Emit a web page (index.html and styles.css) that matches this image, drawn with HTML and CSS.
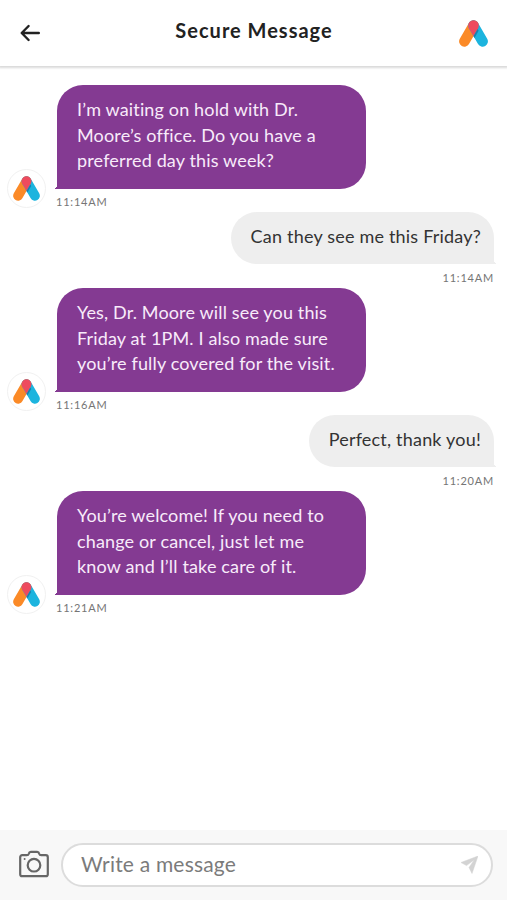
FILE: index.html
```
<!DOCTYPE html>
<html lang="en">
<head>
    <meta charset="UTF-8">
    <meta name="viewport" content="width=device-width, initial-scale=1.0">
    <title>Secure Message</title>
    <link rel="stylesheet" href="styles.css">
</head>
<body>

    <!-- shared shapes -->
    <svg class="defs" width="0" height="0">
        <symbol id="logo" viewBox="0 0 29 27">
            <path d="M5.4 21.4 14.5 5.6" stroke="#fb8a27" stroke-width="10.6" stroke-linecap="round" fill="none"/>
            <path d="M14.5 5.6 23.6 21.4" stroke="#1cb4de" stroke-width="10.6" stroke-linecap="round" fill="none"/>
            <circle cx="14.5" cy="5.6" r="5.3" fill="#ee4b5e"/>
            <path d="M9.9 8.2 14.5 16.2 19.1 8.2 14.5 4z" fill="#ee4b5e"/>
            <path d="M14.5 16.2 18.6 9.1 19.6 10.8 15.5 17.9z" fill="#1a80ae"/>
        </symbol>
    </svg>

    <header class="header">
        <svg class="back" viewBox="0 0 20 18" width="20" height="18">
            <path d="M18.8 9H2M8.6 2 1.7 9l6.9 7" fill="none" stroke="#222" stroke-width="2.4" stroke-linecap="round" stroke-linejoin="round"/>
        </svg>
        <h1 class="title">Secure Message</h1>
        <svg class="brand" width="29" height="27"><use href="#logo"/></svg>
    </header>

    <main class="chat">
        <div class="message received">
            <div class="avatar"><svg width="27" height="25"><use href="#logo"/></svg></div>
            <div class="content">
                <p class="bubble">I’m waiting on hold with Dr.<br>Moore’s office. Do you have a<br>preferred day this week?</p>
                <span class="time">11:14AM</span>
            </div>
        </div>

        <div class="message sent">
            <div class="content">
                <p class="bubble">Can they see me this Friday?</p>
                <span class="time">11:14AM</span>
            </div>
        </div>

        <div class="message received">
            <div class="avatar"><svg width="27" height="25"><use href="#logo"/></svg></div>
            <div class="content">
                <p class="bubble">Yes, Dr. Moore will see you this<br>Friday at 1PM. I also made sure<br>you’re fully covered for the visit.</p>
                <span class="time">11:16AM</span>
            </div>
        </div>

        <div class="message sent">
            <div class="content">
                <p class="bubble">Perfect, thank you!</p>
                <span class="time">11:20AM</span>
            </div>
        </div>

        <div class="message received">
            <div class="avatar"><svg width="27" height="25"><use href="#logo"/></svg></div>
            <div class="content">
                <p class="bubble">You’re welcome! If you need to<br>change or cancel, just let me<br>know and I’ll take care of it.</p>
                <span class="time">11:21AM</span>
            </div>
        </div>
    </main>

    <footer class="composer">
        <svg class="camera" viewBox="0 0 30 28" width="30" height="28" fill="none" stroke="#666" stroke-width="2.2">
            <path d="M3.2 5.2h4.6c1.2 0 1.7-.5 2-1.5.3-1.3.9-1.8 2-1.8h6.4c1.1 0 1.7.5 2 1.8.3 1 .8 1.5 2 1.5h4.6a2 2 0 0 1 2 2v17a2 2 0 0 1-2 2H3.2a2 2 0 0 1-2-2v-17a2 2 0 0 1 2-2z"/>
            <circle cx="15" cy="15.2" r="6.3"/>
            <circle cx="5.6" cy="9" r="1" fill="#666" stroke="none"/>
        </svg>
        <div class="field">
            <span class="placeholder">Write a message</span>
            <svg class="send" viewBox="0 0 17 18" width="17" height="18">
                <path d="M17 0 0 6.5 5.5 9.6 13.4 3.7 8 11.5 11 17.5z" fill="#d3d3d3" stroke="#d3d3d3" stroke-width=".5"/>
            </svg>
        </div>
    </footer>

</body>
</html>
```

FILE: styles.css
```
* {
    box-sizing: border-box;
}

body {
    margin: 0;
    height: 900px;
    display: flex;
    flex-direction: column;
    font-family: Lato, "Liberation Sans", sans-serif;
    background-color: #fff;
    color: #222;
    overflow: hidden;
}

.defs {
    position: absolute;
}

.header {
    height: 66px;
    padding: 0 19px 0 20px;
    display: grid;
    grid-template-columns: 29px 1fr 29px;
    align-items: center;
    box-shadow: 0 1px 2px 1px rgba(0, 0, 0, 0.15);
}

.title {
    margin: 0;
    padding-bottom: 6px;
    font-size: 20px;
    line-height: 24px;
    font-weight: 700;
    letter-spacing: 1px;
    text-align: center;
}

.brand {
    margin-top: 1px;
}

.chat {
    flex: 1;
    padding: 19px 13px 0 7px;
}

.message {
    display: flex;
}

.received {
    height: 127px;
    align-items: flex-end;
    gap: 11px;
}

.sent {
    height: 76px;
    justify-content: flex-end;
}

.content {
    display: flex;
    flex-direction: column;
    height: 100%;
}

.avatar {
    width: 39px;
    height: 39px;
    margin-bottom: 4px;
    display: flex;
    align-items: center;
    justify-content: center;
    border: 1px solid #f1f1f1;
    border-radius: 50%;
}

.bubble {
    position: relative;
    margin: 0;
    padding: 12px 14px 14px 20px;
    border-radius: 26px;
    font-size: 18px;
    line-height: 25.7px;
    letter-spacing: 0.15px;
    white-space: nowrap;
}

/* little tail at the bottom corner */
.bubble::after {
    content: "";
    position: absolute;
    bottom: 0;
    width: 4px;
    height: 4px;
}

.received .bubble {
    width: 309px;
    height: 104px;
    background-color: #843a92;
    color: #f8ebfa;
    border-bottom-left-radius: 0;
}

.received .bubble::after {
    left: -3px;
    background: linear-gradient(to bottom right, transparent 50%, #843a92 52%);
}

.sent .bubble {
    height: 52px;
    padding-right: 13px;
    background-color: #eee;
    color: #333;
    letter-spacing: 0.2px;
    border-bottom-right-radius: 0;
}

.sent .bubble::after {
    right: -3px;
    background: linear-gradient(to bottom left, transparent 50%, #eee 52%);
}

.time {
    padding-top: 5px;
    font-size: 11px;
    line-height: 16px;
    letter-spacing: 0.8px;
    color: #757575;
}

.received .time {
    margin-left: -1px;
}

.sent .time {
    padding-top: 6px;
    text-align: right;
}

.composer {
    height: 70px;
    padding: 0 14px 0 19px;
    display: flex;
    align-items: center;
    gap: 12px;
    background-color: #f8f8f8;
}

.camera {
    margin-bottom: 2px;
}

.field {
    flex: 1;
    height: 44px;
    padding: 0 13px 0 18px;
    display: flex;
    align-items: center;
    justify-content: space-between;
    border: 2px solid #dcdcdc;
    border-radius: 22px;
    background-color: #fff;
}

.placeholder {
    padding-bottom: 3px;
    font-size: 21px;
    letter-spacing: 0.2px;
    color: #7b7b7b;
}
```
